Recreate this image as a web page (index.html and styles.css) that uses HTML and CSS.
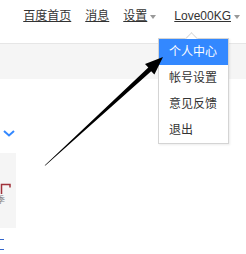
FILE: index.html
```html
<!DOCTYPE html>
<html lang="zh-CN">

<head>
    <meta charset="UTF-8">
    <meta name="viewport" content="width=device-width, initial-scale=1.0">
    <title>设置菜单</title>
    <link rel="stylesheet" href="styles.css">
</head>

<body>
    <!-- 顶部导航 -->
    <div class="header">
        <div class="nav">
            <a class="nav-link" href="javascript:;">百度首页</a>
            <a class="nav-link gap" href="javascript:;">消息</a>
            <a class="nav-link gap" href="javascript:;">设置</a><span class="caret"></span>
            <a class="nav-link gap-user" href="javascript:;">Love00KG</a><span class="caret"></span>
        </div>
    </div>
    <div class="band"></div>

    <!-- 下面的内容 -->
    <div class="content">
        <svg class="chevron" width="12" height="7" viewBox="0 0 12 7">
            <path d="M1 1 L6 5.5 L11 1" fill="none" stroke="#3388ff" stroke-width="2"/>
        </svg>
        <div class="card">
            <svg class="card-mark" width="12" height="12" viewBox="0 0 12 12">
                <path d="M1.5 11 V1.5 H10 V4.5" fill="none" stroke="#a0323a" stroke-width="1.5"/>
            </svg>
            <span class="card-text">季</span>
        </div>
        <div class="links">
            <span class="link-line"></span>
            <span class="link-line"></span>
        </div>
    </div>

    <!-- 下拉菜单 -->
    <div class="dropdown">
        <span class="dropdown-tip"></span>
        <a class="menu-item active" href="javascript:;">个人中心</a>
        <a class="menu-item" href="javascript:;">帐号设置</a>
        <a class="menu-item" href="javascript:;">意见反馈</a>
        <a class="menu-item" href="javascript:;">退出</a>
    </div>

    <!-- 标注箭头 -->
    <svg class="pointer" width="246" height="254" viewBox="0 0 246 254">
        <polygon points="44.6,165.4 148.3,67.4 145,64 163,57 154.4,74.4 151.2,71.2 45.4,165.6" fill="#000"/>
    </svg>
</body>

</html>
```

FILE: styles.css
```css
* {
    margin: 0;
    padding: 0;
}

body {
    width: 246px;
    height: 254px;
    overflow: hidden;
    background-color: #fff;
    font-family: Arial, "Liberation Sans", "Noto Sans CJK SC", sans-serif;
    font-size: 12px;
    color: #333;
    position: relative;
}

.header {
    height: 43px;
    border-bottom: 1px solid #e6e6e6;
}

.nav {
    display: flex;
    justify-content: flex-end;
    align-items: center;
    padding: 6px 6px 0 0;
    line-height: 20px;
}

.nav-link {
    color: #333;
    text-decoration: underline;
}

.gap {
    margin-left: 14px;
}

.gap-user {
    margin-left: 18px;
}

/* 灰色小三角 */
.caret {
    width: 0;
    height: 0;
    margin: 1px 0 0 3px;
    border-left: 3.5px solid transparent;
    border-right: 3.5px solid transparent;
    border-top: 4px solid #999;
}

.band {
    height: 35px;
    background-color: #f5f5f5;
}

.content {
    padding-top: 51px;
}

.chevron {
    display: block;
    margin-left: 3px;
}

.card {
    width: 16px;
    height: 75px;
    margin-top: 16px;
    background-color: #f5f5f5;
    position: relative;
    overflow: hidden;
}

.card-mark {
    display: block;
    margin-top: 30px;
}

.card-text {
    display: block;
    margin: 0 0 0 -4px;
    font-size: 9px;
    line-height: 10px;
    color: #888;
}

.links {
    display: flex;
    flex-direction: column;
    gap: 9px;
    margin-top: 11px;
}

.link-line {
    display: block;
    width: 4px;
    height: 1px;
    background-color: #3366cc;
}

.dropdown {
    position: absolute;
    top: 38px;
    left: 158px;
    width: 69px;
    background-color: #fff;
    border: 1px solid #d4d4d4;
    box-shadow: 1px 1px 2px rgba(0, 0, 0, 0.08);
}

/* 上方的小尖角 */
.dropdown-tip {
    position: absolute;
    top: -5px;
    left: 28px;
    width: 8px;
    height: 8px;
    background-color: #fff;
    border-top: 1px solid #d9d9d9;
    border-left: 1px solid #d9d9d9;
    transform: rotate(45deg);
}

.menu-item {
    display: block;
    height: 26px;
    line-height: 26px;
    padding-left: 10px;
    color: #333;
    text-decoration: none;
    position: relative;
}

.menu-item.active {
    background-color: #3388ff;
    color: #fff;
}

.pointer {
    position: absolute;
    top: 0;
    left: 0;
    pointer-events: none;
}
```
